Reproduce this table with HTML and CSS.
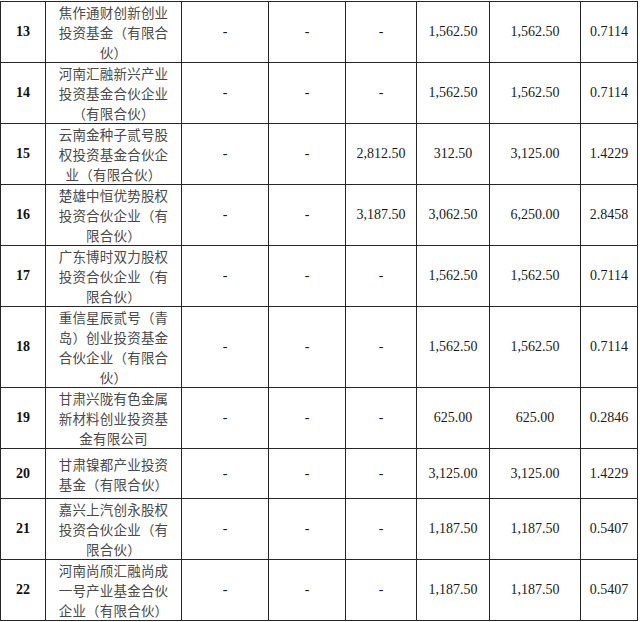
FILE: index.html
```html
<!DOCTYPE html>
<html lang="zh-CN">
<head>
<meta charset="utf-8">
<title>投资基金表</title>
<link rel="stylesheet" href="styles.css">
</head>
<body>
<table class="grid">
  <colgroup>
    <col class="c-no"><col class="c-name"><col class="c-a"><col class="c-b"><col class="c-c"><col class="c-d"><col class="c-e"><col class="c-f">
  </colgroup>
  <tbody>
    <tr><td class="no">13</td><td class="name">焦作通财创新创业<br>投资基金（有限合<br>伙）</td><td>-</td><td>-</td><td>-</td><td>1,562.50</td><td>1,562.50</td><td>0.7114</td></tr>
    <tr><td class="no">14</td><td class="name">河南汇融新兴产业<br>投资基金合伙企业<br>（有限合伙）</td><td>-</td><td>-</td><td>-</td><td>1,562.50</td><td>1,562.50</td><td>0.7114</td></tr>
    <tr><td class="no">15</td><td class="name">云南金种子贰号股<br>权投资基金合伙企<br>业（有限合伙）</td><td>-</td><td>-</td><td>2,812.50</td><td>312.50</td><td>3,125.00</td><td>1.4229</td></tr>
    <tr><td class="no">16</td><td class="name">楚雄中恒优势股权<br>投资合伙企业（有<br>限合伙）</td><td>-</td><td>-</td><td>3,187.50</td><td>3,062.50</td><td>6,250.00</td><td>2.8458</td></tr>
    <tr><td class="no">17</td><td class="name">广东博时双力股权<br>投资合伙企业（有<br>限合伙）</td><td>-</td><td>-</td><td>-</td><td>1,562.50</td><td>1,562.50</td><td>0.7114</td></tr>
    <tr><td class="no">18</td><td class="name">重信星辰贰号（青<br>岛）创业投资基金<br>合伙企业（有限合<br>伙）</td><td>-</td><td>-</td><td>-</td><td>1,562.50</td><td>1,562.50</td><td>0.7114</td></tr>
    <tr><td class="no">19</td><td class="name">甘肃兴陇有色金属<br>新材料创业投资基<br>金有限公司</td><td>-</td><td>-</td><td>-</td><td>625.00</td><td>625.00</td><td>0.2846</td></tr>
    <tr class="short"><td class="no">20</td><td class="name">甘肃镍都产业投资<br>基金（有限合伙）</td><td>-</td><td>-</td><td>-</td><td>3,125.00</td><td>3,125.00</td><td>1.4229</td></tr>
    <tr><td class="no">21</td><td class="name">嘉兴上汽创永股权<br>投资合伙企业（有<br>限合伙）</td><td>-</td><td>-</td><td>-</td><td>1,187.50</td><td>1,187.50</td><td>0.5407</td></tr>
    <tr><td class="no">22</td><td class="name">河南尚颀汇融尚成<br>一号产业基金合伙<br>企业（有限合伙）</td><td>-</td><td>-</td><td>-</td><td>1,187.50</td><td>1,187.50</td><td>0.5407</td></tr>
  </tbody>
</table>
</body>
</html>
```
FILE: styles.css
```css
html, body {
  margin: 0;
  padding: 0;
  background: #ffffff;
}
body {
  padding-top: 1px;
}
.grid {
  border-collapse: collapse;
  table-layout: fixed;
  width: 638px;
  font-family: "Liberation Serif", "Times New Roman", "Noto Sans CJK SC", serif;
  font-size: 14px;
  color: #1a1a1a;
}
.c-no { width: 45px; }
.c-name { width: 136px; }
.c-a { width: 87px; }
.c-b { width: 77px; }
.c-c { width: 71px; }
.c-d { width: 73px; }
.c-e { width: 91px; }
.c-f { width: 57px; }
.grid td {
  border: 1px solid #262626;
  padding: 0;
  text-align: center;
  vertical-align: middle;
  line-height: 20px;
  height: 60px;
}
.grid tr.short td {
  height: 49px;
}
.grid td.no {
  font-weight: bold;
  color: #111;
}
.grid td.name {
  font-family: "Noto Sans CJK SC", sans-serif;
  font-size: 13.5px;
  color: #4a4a4a;
  letter-spacing: 0.2px;
}
```
